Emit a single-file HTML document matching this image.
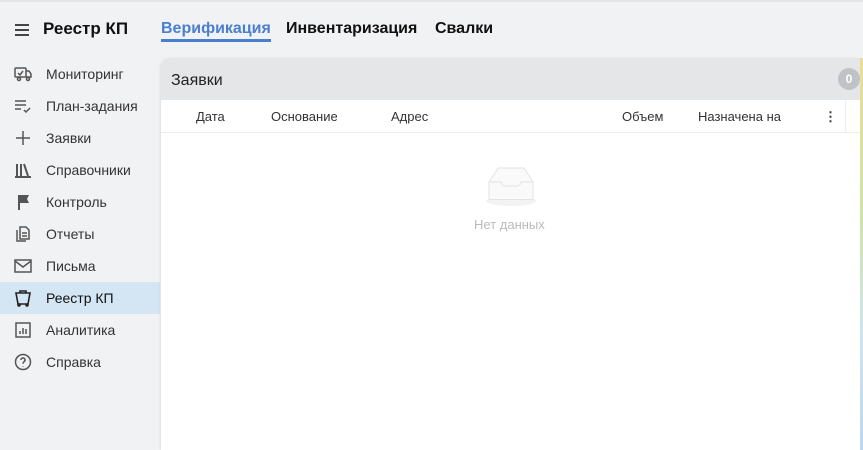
<!DOCTYPE html>
<html><head><meta charset="utf-8"><style>
*{margin:0;padding:0;box-sizing:border-box}
body{width:863px;height:450px;overflow:hidden;background:#f1f2f4;font-family:"Liberation Sans","Noto Sans CJK SC",sans-serif;position:relative;color:#222}
.top{position:absolute;left:0;top:0;width:863px;height:2px;background:#e4e5e7}
.burger{position:absolute;left:15px;top:24px;width:14px}
.burger i{display:block;height:2px;background:#444;margin-bottom:3px}
.title{position:absolute;left:43px;top:19px;font-size:17px;font-weight:bold;color:#111}
.tabs{position:absolute;top:20px;font-size:16px;font-weight:bold;color:#111}
.tab{position:absolute;white-space:nowrap}
.act{color:#4a7fcf;border-bottom:3px solid #4a7fcf;padding-bottom:1px}
.menu{position:absolute;left:0;top:58px;width:160px}
.it{height:32px;display:flex;align-items:center;font-size:14px;color:#333}
.it svg{width:20px;height:20px;margin-left:13px;margin-right:13px}
.it.sel{background:#d4e6f4;color:#111}
.panel{position:absolute;left:161px;top:58px;width:699px;height:392px;background:#fff;border-top-left-radius:10px;overflow:hidden;box-shadow:-1px 0 2px rgba(0,0,0,.08)}
.ph{height:42px;background:#e5e6e8;font-size:16px;padding:14px 10px;color:#222}
.badge{position:absolute;right:0;top:10px;width:22px;height:22px;border-radius:11px;background:#bfc3c6;color:#fff;font-size:12px;font-weight:bold;text-align:center;line-height:22px}
.th{height:33px;border-bottom:1px solid #eee;position:relative;font-size:13px;color:#333}
.th span{position:absolute;top:9px}
.strip{position:absolute;left:860px;top:58px;width:3px;height:392px;background:linear-gradient(#e8dc9a,#cfe3a8 40%,#cfe4ee 70%,#bcd8ee)}
.empty{position:absolute;left:313px;top:159px;font-size:13px;color:#bbb}
</style></head><body>
<div class="top"></div>
<div class="burger"><i></i><i></i><i></i></div>
<div class="title">Реестр КП</div>
<div class="tabs"><span class="tab act" style="left:161px">Верификация</span><span class="tab" style="left:286px">Инвентаризация</span><span class="tab" style="left:435px">Свалки</span></div>
<div class="menu">
<div class="it"><svg viewBox="0 0 20 20" fill="none" stroke="#555" stroke-width="1.5"><rect x="2" y="4" width="11" height="9" rx="1"/><path d="M13 7h3l2 3v3h-5M5 9l2 2 3-4"/><circle cx="6" cy="15" r="1.5"/><circle cx="15" cy="15" r="1.5"/></svg>Мониторинг</div>
<div class="it"><svg viewBox="0 0 20 20" fill="none" stroke="#555" stroke-width="1.5"><path d="M2 5h11M2 9h11M2 13h6M11 14l2 2 4-4"/></svg>План-задания</div>
<div class="it"><svg viewBox="0 0 20 20" fill="none" stroke="#555" stroke-width="1.5"><path d="M10 3v14M3 10h14"/></svg>Заявки</div>
<div class="it"><svg viewBox="0 0 20 20" fill="none" stroke="#555" stroke-width="2"><path d="M4 4v12M8 4v12M11 4l4 12M2 17h16"/></svg>Справочники</div>
<div class="it"><svg viewBox="0 0 20 20" fill="#555"><path d="M5 3h2v15H5zM7 3h9l-2 4 2 4H7z"/></svg>Контроль</div>
<div class="it"><svg viewBox="0 0 20 20" fill="none" stroke="#555" stroke-width="1.5"><path d="M4 6v11h9M7 3h6l3 3v9H7zM9 9h5M9 12h5"/></svg>Отчеты</div>
<div class="it"><svg viewBox="0 0 20 20" fill="none" stroke="#555" stroke-width="1.5"><rect x="2" y="4" width="16" height="12"/><path d="M2 5l8 6 8-6"/></svg>Письма</div>
<div class="it sel"><svg viewBox="0 0 20 20" fill="none" stroke="#222" stroke-width="1.6"><path d="M3 5h14l-2 11H5zM7 5V3h6v2"/><circle cx="6" cy="17" r="1"/><circle cx="14" cy="17" r="1"/></svg>Реестр КП</div>
<div class="it"><svg viewBox="0 0 20 20" fill="none" stroke="#555" stroke-width="1.5"><rect x="3" y="3" width="14" height="14"/><path d="M7 14v-3M10 14V8M13 14v-5"/></svg>Аналитика</div>
<div class="it"><svg viewBox="0 0 20 20" fill="none" stroke="#555" stroke-width="1.5"><circle cx="10" cy="10" r="7.5"/><path d="M8 8a2 2 0 1 1 3 1.7c-.8.5-1 1-1 2M10 14v.5"/></svg>Справка</div>
</div>
<div class="panel">
<div class="ph">Заявки<div class="badge">0</div></div>
<div class="th"><span style="left:35px">Дата</span><span style="left:110px">Основание</span><span style="left:230px">Адрес</span><span style="left:461px">Объем</span><span style="left:537px">Назначена на</span><span style="left:663px;font-weight:bold">⋮</span><i style="position:absolute;left:684px;top:0;width:1px;height:33px;background:#eee"></i></div>
<svg style="position:absolute;left:318px;top:104px" width="64" height="46" viewBox="0 0 64 46"><ellipse cx="32" cy="39" rx="25" ry="5" fill="#f3f3f3"/><path d="M10 20L19 6h26l9 14v16a1.5 1.5 0 0 1-1.5 1.5h-41A1.5 1.5 0 0 1 10 36z" fill="#fafafa" stroke="#e3e3e3"/><path d="M10 20h12a4 4 0 0 0 4 4h12a4 4 0 0 0 4-4h12" fill="none" stroke="#e3e3e3"/></svg>
<div class="empty">Нет данных</div>
</div>
<div class="strip"></div>
</body></html>
